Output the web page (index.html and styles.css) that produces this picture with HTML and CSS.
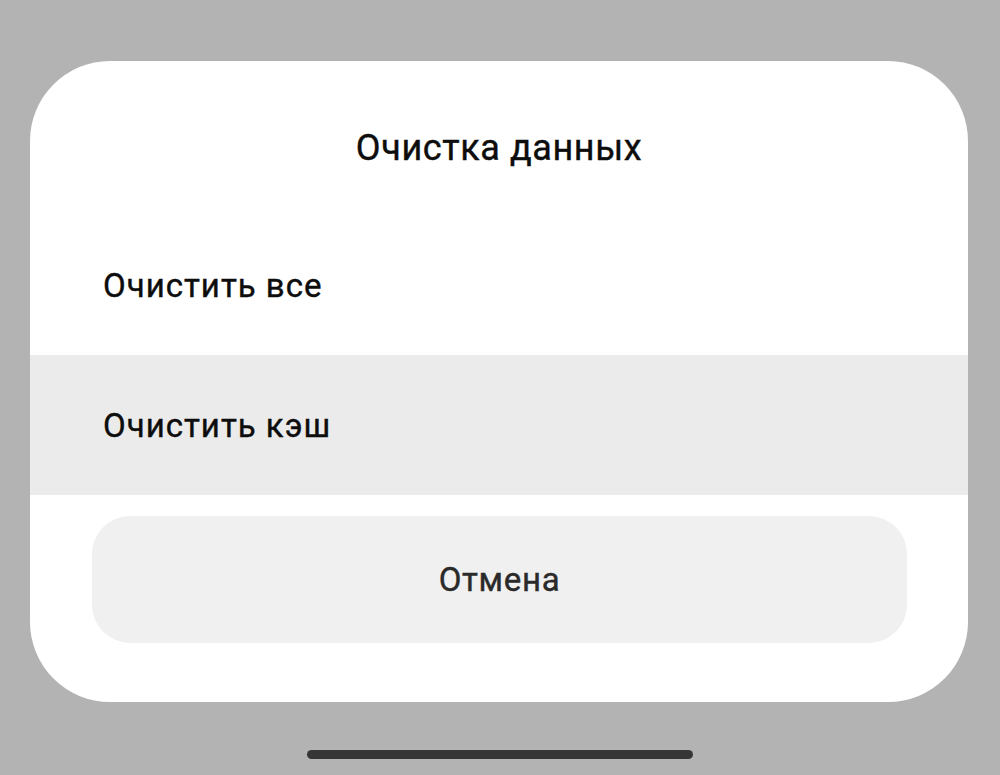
FILE: index.html
```html
<!DOCTYPE html>
<html lang="ru">
<head>
<meta charset="utf-8">
<title>Очистка данных</title>
<link rel="stylesheet" href="styles.css">
</head>
<body>
<div class="screen">
  <div class="dialog">
    <div class="title">Очистка данных</div>
    <div class="row">Очистить все</div>
    <div class="row row-active">Очистить кэш</div>
    <div class="cancel">Отмена</div>
  </div>
  <div class="home-bar"></div>
</div>
</body>
</html>
```
FILE: styles.css
```css
html, body {
  margin: 0;
  padding: 0;
  background: #b3b3b3;
}
.screen {
  width: 1000px;
  height: 775px;
  display: flex;
  flex-direction: column;
  align-items: flex-start;
  padding-top: 61px;
  box-sizing: border-box;
  font-family: Roboto, "Noto Sans", sans-serif;
}
.dialog {
  margin-left: 30px;
  width: 938px;
  height: 641px;
  background: #ffffff;
  border-radius: 80px;
  overflow: hidden;
  display: flex;
  flex-direction: column;
  box-sizing: border-box;
  padding-bottom: 59px;
}
.title {
  height: 154px;
  box-sizing: border-box;
  padding-top: 65px;
  line-height: 44px;
  font-size: 36px;
  font-weight: 400;
  letter-spacing: 0.6px;
  color: #0d0d0d;
  text-align: center;
  -webkit-text-stroke: 0.4px #0d0d0d;
}
.row {
  height: 140px;
  display: flex;
  align-items: center;
  padding-left: 73px;
  font-size: 33px;
  font-weight: 400;
  letter-spacing: 1px;
  color: #0d0d0d;
  -webkit-text-stroke: 0.4px #0d0d0d;
}
.row-active {
  background: #ebebeb;
}
.cancel {
  margin: 21px 61px 0 62px;
  height: 127px;
  border-radius: 38px;
  background: #f0f0f0;
  display: flex;
  align-items: center;
  justify-content: center;
  font-size: 33px;
  font-weight: 400;
  letter-spacing: 0.7px;
  color: #2a2a2a;
  -webkit-text-stroke: 0.4px #2a2a2a;
}
.home-bar {
  margin-top: 48px;
  margin-left: 307px;
  width: 386px;
  height: 9px;
  border-radius: 5px;
  background: #363636;
}
```
